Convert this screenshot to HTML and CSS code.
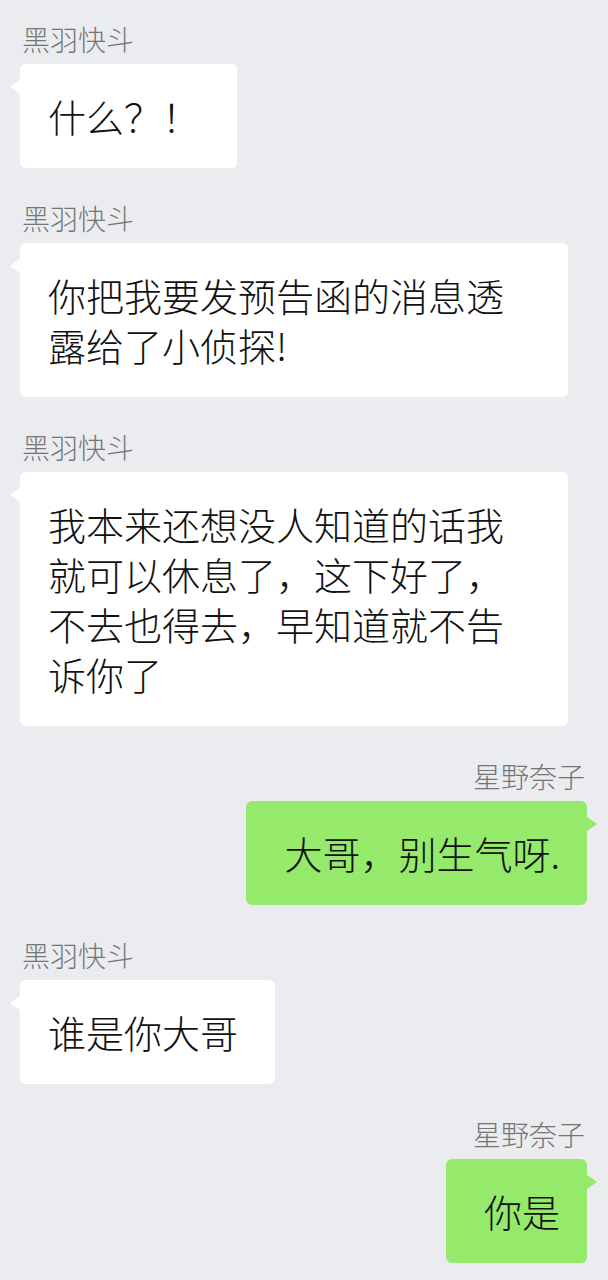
FILE: index.html
```html
<!DOCTYPE html>
<html lang="zh-CN">
<head>
<meta charset="utf-8">
<title>聊天</title>
<link rel="stylesheet" href="styles.css">
</head>
<body>
<main class="chat">
  <div class="msg msg-left">
    <div class="name">黑羽快斗</div>
    <div class="bubble">什么？！</div>
  </div>
  <div class="msg msg-left">
    <div class="name">黑羽快斗</div>
    <div class="bubble">你把我要发预告函的消息透露给了小侦探!</div>
  </div>
  <div class="msg msg-left">
    <div class="name">黑羽快斗</div>
    <div class="bubble">我本来还想没人知道的话我就可以休息了，这下好了，不去也得去，早知道就不告诉你了</div>
  </div>
  <div class="msg msg-right">
    <div class="name">星野奈子</div>
    <div class="bubble">大哥，别生气呀.</div>
  </div>
  <div class="msg msg-left">
    <div class="name">黑羽快斗</div>
    <div class="bubble">谁是你大哥</div>
  </div>
  <div class="msg msg-right">
    <div class="name">星野奈子</div>
    <div class="bubble">你是</div>
  </div>
</main>
</body>
</html>
```

FILE: styles.css
```css
html {
  background: #ebecf0;
}

body {
  margin: 0;
  min-height: 1280px;
  background: #ebecf0;
  font-family: "Noto Sans CJK SC", "Noto Sans", sans-serif;
}

.chat {
  display: flex;
  flex-direction: column;
  gap: 36px;
  padding: 25px 21px 16px 20px;
}

.msg {
  display: flex;
  flex-direction: column;
  gap: 11px;
}

.msg-left {
  align-items: flex-start;
}

.msg-right {
  align-items: flex-end;
}

.name {
  font-size: 28px;
  line-height: 28px;
  font-weight: 300;
  color: #757575;
  padding: 0 2px;
}

.bubble {
  position: relative;
  max-width: 548px;
  box-sizing: border-box;
  font-size: 38px;
  line-height: 50px;
  font-weight: 300;
  color: #111111;
  border-radius: 6px;
  word-break: break-all;
}

.msg-left .bubble {
  background: #ffffff;
  padding: 27px 37px 27px 28px;
}

.msg-right .bubble {
  background: #95e96b;
  padding: 27px 27px 27px 38px;
}

.bubble::before {
  content: "";
  position: absolute;
  top: 16px;
  width: 0;
  height: 0;
  border-top: 7px solid transparent;
  border-bottom: 7px solid transparent;
}

.msg-left .bubble::before {
  left: -10px;
  border-right: 10px solid #ffffff;
}

.msg-right .bubble::before {
  right: -10px;
  border-left: 10px solid #95e96b;
}
```
